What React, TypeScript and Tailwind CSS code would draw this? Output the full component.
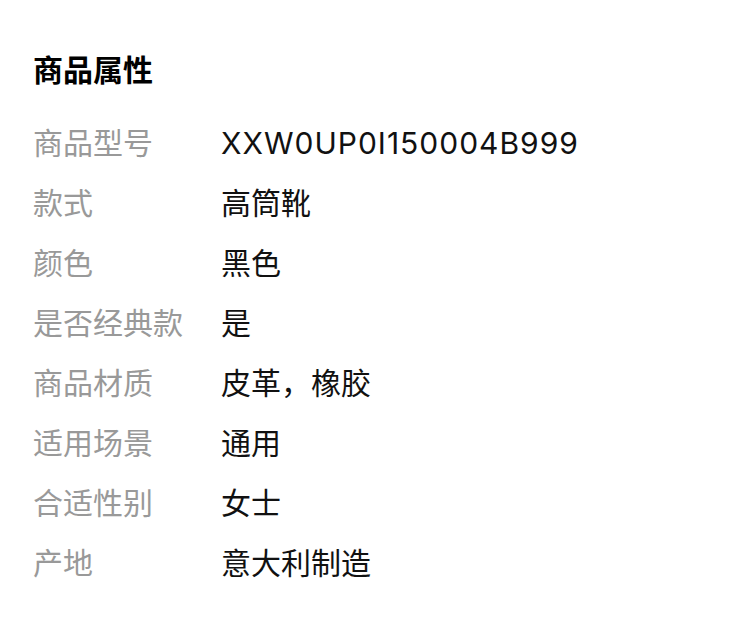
export default function App() {
  const rows: [string, string][] = [
    ["商品型号", "XXW0UP0I150004B999"],
    ["款式", "高筒靴"],
    ["颜色", "黑色"],
    ["是否经典款", "是"],
    ["商品材质", "皮革，橡胶"],
    ["适用场景", "通用"],
    ["合适性别", "女士"],
    ["产地", "意大利制造"],
  ];
  return (
    <div
      className="w-[750px] h-[622px] bg-white pl-[33px] pt-[52px]"
      style={{ fontFamily: 'Inter, "Noto Sans CJK SC", sans-serif' }}
    >
      <div className="text-[30px] font-bold leading-[36px] text-black">商品属性</div>
      <div className="mt-[25px] flex flex-col">
        {rows.map(([k, v], i) => (
          <div key={k} className="flex h-[60px] items-center text-[30px] leading-[36px]">
            <div className="w-[188px] text-[#999999]">{k}</div>
            <div className={i === 0 ? "text-[#111111] tracking-[1px]" : "text-[#111111]"}>{v}</div>
          </div>
        ))}
      </div>
    </div>
  );
}
